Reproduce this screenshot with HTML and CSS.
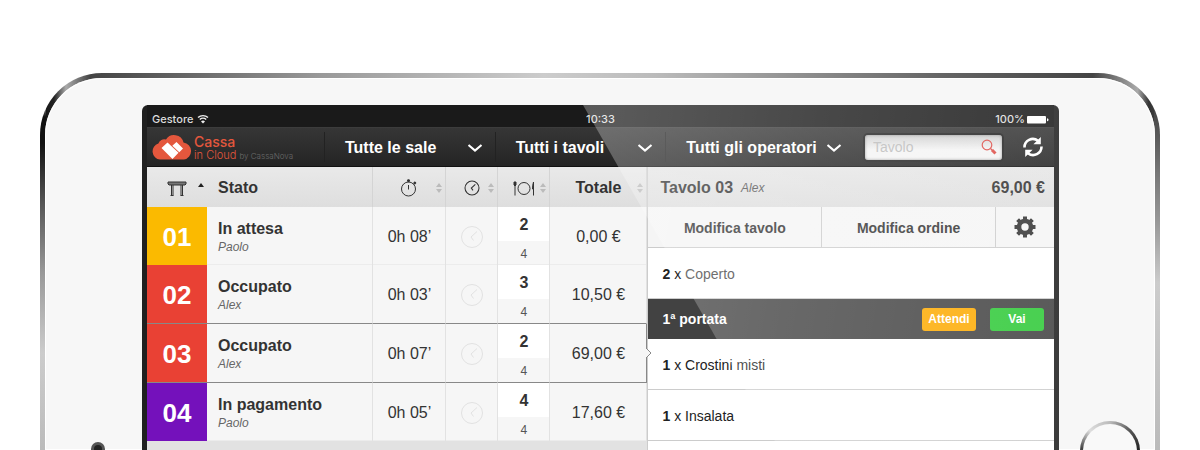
FILE: index.html
```html
<!DOCTYPE html>
<html lang="it">
<head>
<meta charset="utf-8">
<meta name="viewport" content="width=device-width, initial-scale=1">
<title>Cassa in Cloud</title>
<link rel="stylesheet" href="styles.css">
</head>
<body>
<svg class="defs" aria-hidden="true">
  <symbol id="sort" viewBox="0 0 8 12"><path d="M1 5 4 1 7 5zM1 7 4 11 7 7z"/></symbol>
  <symbol id="clock" viewBox="0 0 24 24"><circle cx="12" cy="12" r="10.5"/><path d="m17 6.500-6 5.500 2.500 3.500"/></symbol>
  <symbol id="chevron" viewBox="0 0 16 10"><path d="m1.500 2 6.500 5.500L14.500 2"/></symbol>
</svg>
<main class="stage">
  <div class="tablet">
    <div class="face">
      <div class="side side-left"><span class="camera"></span></div>
      <div class="screen">
        <div class="status-bar">
          <span class="carrier">Gestore
            <svg class="wifi" viewBox="0 0 12 10"><path d="M1 3.600a7.200 7.200 0 0 1 10 0M2.800 5.600a4.600 4.600 0 0 1 6.400 0"/><path class="solid" d="M6 9.500 4 7.400a2.900 2.900 0 0 1 4 0z"/></svg>
          </span>
          <span>10:33</span>
          <span class="battery">100%
            <svg class="battery-icon" viewBox="0 0 22 9"><rect y="1" width="19" height="7.500" rx="1"/><path d="M20 3.200q1.500 0 1.500 1.500T20 6.200z"/></svg>
          </span>
        </div>
        <header class="toolbar">
          <a class="brand" href="#">
            <svg class="cloud" viewBox="0 0 40 26"><path class="cloud-shape" d="M8 25.500a8.200 8.200 0 0 1-1.600-16A6 6 0 0 1 14 5.500 9.700 9.700 0 0 1 31.500 8.500 8.600 8.600 0 0 1 32 25.500z"/><path class="cloud-mark" d="m9.500 14 6-5.500 11 10.300-6 6.200zM20.300 11.800 24.500 8l6.500 6.500-3.700 3.700z"/></svg>
            <span class="brand-text"><strong>Cassa</strong><span class="brand-line">in Cloud <small>by CassaNova</small></span></span>
          </a>
          <button class="menu" type="button">Tutte le sale<svg class="chevron"><use href="#chevron"/></svg></button>
          <button class="menu" type="button">Tutti i tavoli<svg class="chevron"><use href="#chevron"/></svg></button>
          <button class="menu menu-wide" type="button">Tutti gli operatori<svg class="chevron"><use href="#chevron"/></svg></button>
          <label class="search">
            <input type="search" placeholder="Tavolo" aria-label="Tavolo">
            <svg class="lens" viewBox="0 0 16 16"><circle cx="6" cy="6" r="4.800"/><path class="lens-neck" d="m9.500 9.500 2 2"/><path class="lens-grip" d="m11 11 3.500 3.500"/></svg>
          </label>
          <button class="refresh" type="button" aria-label="Aggiorna">
            <svg viewBox="0 0 22 22"><path class="arc" d="M2.500 11.500A8.300 8.300 0 0 1 16 4.800M19.500 10.500A8.300 8.300 0 0 1 6 17.200"/><path d="M18.800 1v7.200h-7.400zM3.200 21v-7.200h7.400z"/></svg>
          </button>
        </header>
        <div class="panels">
          <section class="tables">
            <table>
              <colgroup><col class="c-num"><col class="c-state"><col class="c-time"><col class="c-clock"><col class="c-seats"><col class="c-total"></colgroup>
              <thead>
                <tr>
                  <th><span class="head"><svg class="i-table" viewBox="0 0 20 15"><path class="top" d="M1 1h18v2l-1 1H2L1 3z"/><path d="M4.500 4v10.500M6 4v10.500M14 4v10.500M15.500 4v10.500M3.500 14.500h3M13.500 14.500h3"/></svg><svg class="sort sort-up"><use href="#sort"/></svg></span></th>
                  <th class="left">Stato</th>
                  <th><span class="head"><svg class="i-watch" viewBox="0 0 18 18"><circle cx="8.500" cy="10" r="7"/><path d="M8.500 6v4.500M8.500 1v2M7 1.200h3M14 4.500l1.500-1.500"/><circle class="dot" cx="8.500" cy="1.800" r="1"/><circle class="dot" cx="14.800" cy="4" r="1"/></svg><svg class="sort"><use href="#sort"/></svg></span></th>
                  <th><span class="head"><svg class="i-clock"><use href="#clock"/></svg><svg class="sort"><use href="#sort"/></svg></span></th>
                  <th><span class="head"><svg class="i-plate" viewBox="0 0 22 15"><circle cx="11" cy="7.500" r="6"/><path d="M2 2v12.500M20.500 1v13.500"/><path class="dot" d="M1 1h2v3L2 5 1 4zM20.500 1q-1 3-1 7h1z"/></svg><svg class="sort"><use href="#sort"/></svg></span></th>
                  <th><span class="head">Totale<svg class="sort"><use href="#sort"/></svg></span></th>
                </tr>
              </thead>
              <tbody>
                <tr>
                  <td class="num yellow">01</td>
                  <td class="left"><b>In attesa</b><i>Paolo</i></td>
                  <td>0h 08’</td>
                  <td><svg class="ghost"><use href="#clock"/></svg></td>
                  <td class="seats"><b>2</b><span>4</span></td>
                  <td>0,00 €</td>
                </tr>
                <tr class="before">
                  <td class="num red">02</td>
                  <td class="left"><b>Occupato</b><i>Alex</i></td>
                  <td>0h 03’</td>
                  <td><svg class="ghost"><use href="#clock"/></svg></td>
                  <td class="seats"><b>3</b><span>4</span></td>
                  <td>10,50 €</td>
                </tr>
                <tr class="selected">
                  <td class="num red">03</td>
                  <td class="left"><b>Occupato</b><i>Alex</i></td>
                  <td>0h 07’</td>
                  <td><svg class="ghost"><use href="#clock"/></svg></td>
                  <td class="seats"><b>2</b><span>4</span></td>
                  <td>69,00 €<svg class="pointer" viewBox="0 0 6 12"><path d="M0 0v1l5 5-5 5v1"/></svg></td>
                </tr>
                <tr>
                  <td class="num purple">04</td>
                  <td class="left"><b>In pagamento</b><i>Paolo</i></td>
                  <td>0h 05’</td>
                  <td><svg class="ghost"><use href="#clock"/></svg></td>
                  <td class="seats"><b>4</b><span>4</span></td>
                  <td>17,60 €</td>
                </tr>
              </tbody>
            </table>
          </section>
          <section class="order">
            <h2 class="order-head">Tavolo 03 <i>Alex</i><span class="amount">69,00 €</span></h2>
            <div class="actions">
              <button type="button">Modifica tavolo</button>
              <button type="button">Modifica ordine</button>
              <button class="settings" type="button" aria-label="Impostazioni">
                <svg viewBox="0 0 24 24"><circle class="ring" cx="12" cy="12" r="6"/><path class="teeth" d="M12 1.500v4M12 18.500v4M1.500 12h4M18.500 12h4M4.600 4.600l2.800 2.800M16.600 16.600l2.800 2.800M4.600 19.400l2.800-2.800M16.600 7.400l2.800-2.800"/></svg>
              </button>
            </div>
            <p class="item"><b>2</b> x <span class="soft">Coperto</span></p>
            <div class="course">
              <h3>1ª portata</h3>
              <button class="wait" type="button">Attendi</button>
              <button class="go" type="button">Vai</button>
            </div>
            <p class="item"><b>1</b> x <span>Crostini misti</span></p>
            <p class="item"><b>1</b> x <span>Insalata</span></p>
          </section>
        </div>
        <div class="glare"></div>
      </div>
      <div class="side side-right"><span class="home"></span></div>
    </div>
  </div>
</main>
</body>
</html>
```
FILE: styles.css
```css
* { box-sizing: border-box; }
body {
  margin: 0;
  background: #fff;
  color: #333;
  font-family: "Liberation Sans", Arial, sans-serif;
}
button { border: 0; background: none; font: inherit; color: inherit; padding: 0; }
svg { flex: none; fill: none; }
.defs { position: absolute; width: 0; height: 0; }

/* Tablet */
.stage { display: flex; height: 100vh; padding: 73px 40px 0; overflow: hidden; }
.tablet {
  flex: 1;
  display: flex;
  min-width: 0;
  padding: 5px 5px 0;
  border-radius: 62px 62px 0 0;
  background:
    linear-gradient(#999 0, #aaa 30px, #111 44px, #111 70px, #555 130px, #999 200px, #ccc 280px, #bbb 100%) left / 6px 100% no-repeat,
    linear-gradient(#999 0, #aaa 20px, #444 36px, #777 100px, #999 150px, #ccc 210px, #bbb 100%) right / 6px 100% no-repeat,
    linear-gradient(90deg, #111 0, #222 14px, #aaa 26px, #444 50px, #555 100px, #999 25%, #ccc 45%, #bbb 55%, #666 80%, #444 94%, #aaa 98%, #333 99%, #444 100%);
}
.face {
  flex: 1;
  display: flex;
  min-width: 0;
  padding-top: 27px;
  border-radius: 57px 57px 0 0;
  background: #f7f7f7;
  box-shadow: 0 0 1px 1px #fff inset;
}
.side { flex: 0 0 97px; display: flex; align-items: flex-end; }
.side-left { justify-content: center; }
.side-right { flex-basis: 96px; justify-content: center; }
.camera {
  width: 14px;
  height: 14px;
  margin: 0 0 -6px 8px;
  border: 3px solid #555;
  border-radius: 50%;
  background: #222;
}
.home {
  width: 60px;
  height: 60px;
  margin: 0 0 -31px 6px;
  padding: 3px;
  border-radius: 50%;
  background: conic-gradient(#bbb, #555 45deg, #222 90deg, #999 180deg, #444 275deg, #ddd 315deg, #bbb);
}
.home::before { content: ""; display: block; height: 100%; border-radius: 50%; background: #f9f9f9; }

/* Screen */
.screen {
  position: relative;
  flex: 1;
  display: flex;
  flex-direction: column;
  min-width: 0;
  padding: 0 5px;
  border-radius: 6px 6px 0 0;
  background: #202020;
  overflow: hidden;
}
.glare {
  position: absolute;
  inset: 0;
  background: linear-gradient(100deg, rgba(255,255,255,.28) 48%, rgba(255,255,255,.2) 70%, rgba(255,255,255,.12) 100%);
  clip-path: polygon(441px 0, 100% 0, 100% 100%, 638px 100%);
  pointer-events: none;
}
.status-bar {
  display: grid;
  grid-template-columns: 1fr auto 1fr;
  align-items: center;
  height: 22px;
  padding: 6px 5px 0;
  background: #1a1a1a;
  color: #ddd;
  font: 500 11px/16px Inter, sans-serif;
}
.carrier, .battery { display: flex; align-items: center; gap: 4px; }
.battery { justify-content: flex-end; gap: 2px; }
.wifi { width: 12px; height: 10px; stroke: #eee; stroke-width: 1.4; }
.wifi .solid { fill: #eee; stroke: none; }
.battery-icon { width: 22px; height: 9px; fill: #fff; }

/* Toolbar */
.toolbar {
  display: flex;
  align-items: center;
  height: 40px;
  border-top: 1px solid #3c3c3c;
  border-bottom: 1px solid #111;
  background: linear-gradient(#363636, #242424);
  color: #fff;
}
.brand { flex: 0 0 177px; display: flex; align-items: center; gap: 2px; padding-left: 5px; color: #e4573d; text-decoration: none; }
.cloud { width: 40px; height: 26px; }
.cloud-shape { fill: #e4573d; }
.cloud-mark { fill: #fff; }
.brand-text { display: flex; flex-direction: column; padding-top: 2px; font: 11px/12px Inter, sans-serif; white-space: nowrap; }
.brand-text strong { font-size: 14px; line-height: 14px; font-weight: 500; }
.brand-line { font-weight: 300; }
.brand-text small { font-size: 8px; color: #6a6a6a; }
.menu {
  flex: 1 1 170px;
  display: flex;
  align-items: center;
  justify-content: space-between;
  height: 30px;
  padding: 2px 12px 0 20px;
  border-left: 1px solid #222;
  font-size: 16px;
  font-weight: bold;
  white-space: nowrap;
}
.menu-wide { flex-basis: 188px; }
.chevron { width: 16px; height: 10px; stroke: #fff; stroke-width: 2.2; }
.search {
  flex: 0 0 137px;
  min-width: 0;
  display: flex;
  align-items: center;
  height: 25px;
  margin-left: 11px;
  padding: 0 5px 0 8px;
  border-radius: 3px;
  background: linear-gradient(#cecece, #f4f4f4 60%);
  box-shadow: 0 0 0 2px #222, inset 0 0 3px #888;
}
.search input { flex: 1; min-width: 0; border: 0; padding: 0; background: none; outline: 0; font: 14px/20px "Liberation Sans", Arial, sans-serif; }
.search input::placeholder { color: #bbb; opacity: 1; }
.lens { width: 16px; height: 16px; stroke: #dd4b45; stroke-width: 1.2; }
.lens-grip { stroke-width: 3; }
.refresh { flex: 0 0 52px; display: flex; justify-content: center; padding-left: 10px; }
.refresh svg { width: 22px; height: 22px; fill: #fff; }
.refresh .arc { fill: none; stroke: #fff; stroke-width: 2.6; }

/* Panels */
.panels { flex: 1; display: flex; }
.tables { flex: 501 1 0; background: #e2e2e2; }
.order { flex: 406 1 0; background: #fff; border-left: 1px solid #ccc; }

table { width: 100%; table-layout: fixed; border-collapse: separate; border-spacing: 0; }
.c-num { width: 60px; }
.c-time { width: 73px; }
.c-clock, .c-seats { width: 52px; }
.c-total { width: 97px; }
th {
  height: 40px;
  padding: 0;
  border-right: 1px solid #d4d4d4;
  background: linear-gradient(#e9e9e9, #dedede);
  font-size: 16px;
}
th:first-child { border-right: 0; }
td {
  position: relative;
  height: 58px;
  padding: 2px 0 0;
  border-right: 1px solid #e2e2e2;
  background: #f6f6f6;
  box-shadow: inset 0 -1px #ececec;
  font-size: 16px;
  line-height: 20px;
  text-align: center;
}
th.left, td.left { padding-left: 11px; text-align: left; }
th.left { padding-top: 2px; }
td.left { padding-top: 4px; }
td.left b { display: block; font-size: 16px; line-height: 18px; }
td.left i { display: block; font-size: 12px; line-height: 18px; color: #666; }
td.num { border-right: 0; color: #fff; font-size: 26px; font-weight: bold; box-shadow: none; }
.yellow { background: #fbba00; }
.red { background: #e94134; }
.purple { background: #7411bb; }
.before td, .selected td { height: 59px; border-bottom: 1px solid #888; box-shadow: none; }
.selected td:last-child { border-right: 1px solid #888; }
td.seats { padding: 0; }
.seats b, .seats span { display: block; }
.seats b { height: 34px; background: #fff; line-height: 36px; }
.seats span { height: 24px; font-size: 12px; line-height: 26px; color: #555; }
.ghost { display: block; width: 24px; height: 24px; margin: 0 auto; stroke: #e2e2e2; stroke-width: 1; }
.pointer { position: absolute; z-index: 1; top: 23px; right: -6px; width: 6px; height: 12px; fill: #f6f6f6; stroke: #888; }

.head { position: relative; display: flex; align-items: center; justify-content: center; height: 40px; padding-top: 2px; }
.head svg { stroke: #333; }
.head .sort { position: absolute; right: 2px; width: 8px; height: 12px; fill: #bbb; stroke: none; }
.head .sort-up { fill: #222; clip-path: inset(0 0 6px); }
.i-table { width: 20px; height: 15px; }
.i-table .top { fill: #777; }
.i-watch { width: 18px; height: 18px; }
.i-clock { width: 16px; height: 16px; stroke-width: 1.6; }
.i-plate { width: 22px; height: 15px; }
.head .dot { fill: #333; }

/* Order */
.order-head {
  display: flex;
  align-items: center;
  gap: 8px;
  height: 40px;
  margin: 0;
  padding: 2px 9px 0 12px;
  background: linear-gradient(#e6e6e6, #dedede);
  font-size: 16px;
  color: #333;
}
.order-head i { font-size: 12px; font-weight: normal; color: #555; }
.amount { margin-left: auto; }
.actions { display: flex; height: 41px; border-bottom: 1px solid #ccc; background: #f5f5f5; }
.actions button { flex: 1; padding-top: 2px; border-right: 1px solid #ccc; font-size: 14px; font-weight: bold; }
.actions .settings { flex: 0 0 58px; display: flex; align-items: center; justify-content: center; padding: 0; border-right: 0; }
.settings svg { width: 24px; height: 24px; stroke: #333; }
.ring { stroke-width: 4.600; }
.teeth { stroke-width: 4; }
.item { height: 51px; margin: 0; padding: 0 14px; border-bottom: 1px solid #ccc; font-size: 14px; line-height: 52px; color: #222; }
.soft { color: #444; }
.course { display: flex; align-items: center; gap: 14px; height: 40px; padding: 0 10px 0 14px; background: #424242; color: #fff; }
.course h3 { flex: 1; margin: 0; font-size: 14px; }
.course button { width: 54px; height: 23px; border-radius: 3px; font-size: 12px; font-weight: bold; }
.wait { background: #fdaa00; }
.go { background: #2ec937; }
```
